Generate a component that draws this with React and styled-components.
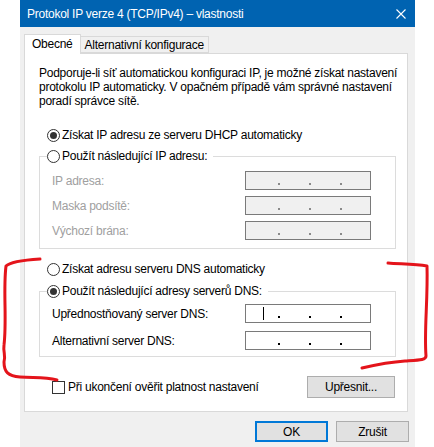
import React from 'react';
import styled, { createGlobalStyle } from 'styled-components';

const Global = createGlobalStyle`
  html, body { margin: 0; padding: 0; background: #ffffff; }
  body {
    font-family: "Liberation Sans", Arial, sans-serif;
    font-size: 12px;
    letter-spacing: -0.25px;
    color: #000;
  }
  * { box-sizing: border-box; }
`;

const Page = styled.div`
  position: relative;
  width: 434px;
  height: 447px;
  padding-left: 20px;
  overflow: hidden;
`;

const Window = styled.div`
  width: 395px;
  height: 447px;
  background: #f0f0f0;
  display: flex;
  flex-direction: column;
`;

const TitleBar = styled.div`
  height: 27px;
  flex: none;
  background: #0063b1;
  color: #fff;
  display: flex;
  align-items: center;
  justify-content: space-between;
  padding: 0 9px 0 7px;
  font-size: 12px;
`;

const Body = styled.div`
  padding: 7px 7px 0 4px;
  display: flex;
  flex-direction: column;
`;

const TabStrip = styled.div`
  display: flex;
  align-items: flex-end;
  height: 19px;
`;

const Tab = styled.div`
  position: relative;
  z-index: ${p => (p.$active ? 1 : 0)};
  height: ${p => (p.$active ? '20px' : '17px')};
  margin-bottom: ${p => (p.$active ? '-1px' : '0')};
  padding: 0 ${p => (p.$active ? '7px' : '4px')};
  background: ${p => (p.$active ? '#ffffff' : '#f0f0f0')};
  border: 1px solid #d9d9d9;
  border-bottom: ${p => (p.$active ? 'none' : '1px solid #d9d9d9')};
  border-left: ${p => (p.$first ? '1px solid #d9d9d9' : 'none')};
  display: flex;
  align-items: center;
  padding-bottom: ${p => (p.$active ? '1px' : '0')};
`;

const Panel = styled.div`
  width: 384px;
  height: 359px;
  background: #fff;
  border: 1px solid #d9d9d9;
  padding: 12px 11px 0 14px;
  display: flex;
  flex-direction: column;
`;

const Para = styled.p`
  margin: 0;
  line-height: 14px;
  white-space: nowrap;
`;

const RadioRow = styled.label`
  display: flex;
  align-items: center;
  gap: 2px;
  height: 14px;
  margin-left: ${p => p.$indent ?? 8}px;
  margin-top: ${p => p.$mt ?? 0}px;
  color: #000;
  white-space: nowrap;
`;

const RadioCircle = styled.span`
  width: 13px;
  height: 13px;
  border-radius: 50%;
  border: 1px solid #333;
  background: #fff;
  display: flex;
  align-items: center;
  justify-content: center;
  flex: none;
  &::after {
    content: '';
    width: 7px;
    height: 7px;
    border-radius: 50%;
    background: ${p => (p.$checked ? '#333' : 'transparent')};
  }
`;

const Group = styled.fieldset`
  margin: ${p => p.$mt}px 0 0 0;
  min-width: 0;
  border: 1px solid #dcdcdc;
  padding: ${p => p.$pt}px 24px ${p => p.$pb}px 12px;
  display: flex;
  flex-direction: column;
  gap: ${p => p.$gap}px;
`;

const Legend = styled.legend`
  margin-left: -5px;
  padding: 0 6px 0 0;
  height: 14px;
`;

const FieldRow = styled.div`
  display: flex;
  align-items: center;
  justify-content: space-between;
  height: 19px;
  color: ${p => (p.$disabled ? '#a0a0a0' : '#000')};
`;

const IpBox = styled.div`
  position: relative;
  width: 126px;
  height: 19px;
  border: 1px solid #7a7a7a;
  background: ${p => (p.$disabled ? '#f0f0f0' : '#fff')};
  display: flex;
  align-items: flex-end;
  padding: 0 0 4px 32px;
  gap: 29px;
`;

const Dot = styled.span`
  width: 2px;
  height: 2px;
  background: ${p => (p.$disabled ? '#8a8a8a' : '#000')};
`;

const Caret = styled.span`
  position: absolute;
  left: 17px;
  top: 2px;
  width: 1px;
  height: 13px;
  background: #000;
`;

const BottomRow = styled.div`
  margin-top: 19px;
  display: flex;
  align-items: center;
  justify-content: space-between;
  padding-left: 13px;
  padding-right: 1px;
`;

const CheckRow = styled.label`
  display: flex;
  align-items: center;
  gap: 3px;
  white-space: nowrap;
`;

const CheckBox = styled.span`
  width: 13px;
  height: 13px;
  border: 1px solid #333;
  background: #fff;
`;

const Button = styled.button`
  font: inherit;
  letter-spacing: inherit;
  color: #000;
  width: ${p => p.$w}px;
  height: ${p => p.$h}px;
  background: #e1e1e1;
  border: ${p => (p.$default ? '2px solid #0078d7' : '1px solid #adadad')};
  padding: 0;
  display: flex;
  align-items: center;
  justify-content: center;
`;

const ButtonBar = styled.div`
  margin-top: 9px;
  display: flex;
  justify-content: flex-end;
  gap: 8px;
  margin-right: -1px;
`;

const Overlay = styled.svg`
  position: absolute;
  left: 0;
  top: 0;
  pointer-events: none;
`;

function Ip({ disabled, caret }) {
  return (
    <IpBox $disabled={disabled}>
      {caret && <Caret />}
      <Dot $disabled={disabled} />
      <Dot $disabled={disabled} />
      <Dot $disabled={disabled} />
    </IpBox>
  );
}

export default function App() {
  return (
    <>
      <Global />
      <Page>
        <Window>
          <TitleBar>
            <span>Protokol IP verze 4 (TCP/IPv4) – vlastnosti</span>
            <svg width="10" height="10" viewBox="0 0 10 10">
              <path d="M0.5 0.5 L9.5 9.5 M9.5 0.5 L0.5 9.5" stroke="#fff" strokeWidth="1.1" />
            </svg>
          </TitleBar>
          <Body>
            <TabStrip>
              <Tab $active $first>Obecné</Tab>
              <Tab>Alternativní konfigurace</Tab>
            </TabStrip>
            <Panel>
              <Para>
                Podporuje-li síť automatickou konfiguraci IP, je možné získat nastavení
                <br />
                protokolu IP automaticky. V opačném případě vám správné nastavení
                <br />
                poradí správce sítě.
              </Para>
              <RadioRow $mt={20}>
                <RadioCircle $checked />
                Získat IP adresu ze serveru DHCP automaticky
              </RadioRow>
              <Group $mt={7} $pt={8} $pb={8} $gap={6}>
                <Legend>
                  <RadioRow $indent={0}>
                    <RadioCircle />
                    Použít následující IP adresu:
                  </RadioRow>
                </Legend>
                <FieldRow $disabled>
                  <span>IP adresa:</span>
                  <Ip disabled />
                </FieldRow>
                <FieldRow $disabled>
                  <span>Maska podsítě:</span>
                  <Ip disabled />
                </FieldRow>
                <FieldRow $disabled>
                  <span>Výchozí brána:</span>
                  <Ip disabled />
                </FieldRow>
              </Group>
              <RadioRow $mt={13}>
                <RadioCircle />
                Získat adresu serveru DNS automaticky
              </RadioRow>
              <Group $mt={8} $pt={6} $pb={6} $gap={8}>
                <Legend>
                  <RadioRow $indent={0}>
                    <RadioCircle $checked />
                    Použít následující adresy serverů DNS:
                  </RadioRow>
                </Legend>
                <FieldRow>
                  <span>Upřednostňovaný server DNS:</span>
                  <Ip caret />
                </FieldRow>
                <FieldRow>
                  <span>Alternativní server DNS:</span>
                  <Ip />
                </FieldRow>
              </Group>
              <BottomRow>
                <CheckRow>
                  <CheckBox />
                  Při ukončení ověřit platnost nastavení
                </CheckRow>
                <Button $w={88} $h={22}>Upřesnit...</Button>
              </BottomRow>
            </Panel>
            <ButtonBar>
              <Button $w={73} $h={21} $default>OK</Button>
              <Button $w={73} $h={21}>Zrušit</Button>
            </ButtonBar>
          </Body>
        </Window>
        <Overlay width="434" height="447" viewBox="0 0 434 447">
          <g fill="none" stroke="#e4141b" strokeWidth="3" strokeLinecap="round" strokeLinejoin="round">
            <path d="M40 259 C 25 260, 10 262, 6 266 C 3 290, 7 320, 4 345 C 3 352, 6 356, 4 362 C 4 372, 8 376, 20 377 C 35 378, 45 377, 57 380" />
            <path d="M388 263 C 400 264, 415 264, 427 266 C 428 300, 424 330, 426 356 C 426 360, 420 360, 405 361 C 390 362, 375 365, 362 368" />
          </g>
        </Overlay>
      </Page>
    </>
  );
}
